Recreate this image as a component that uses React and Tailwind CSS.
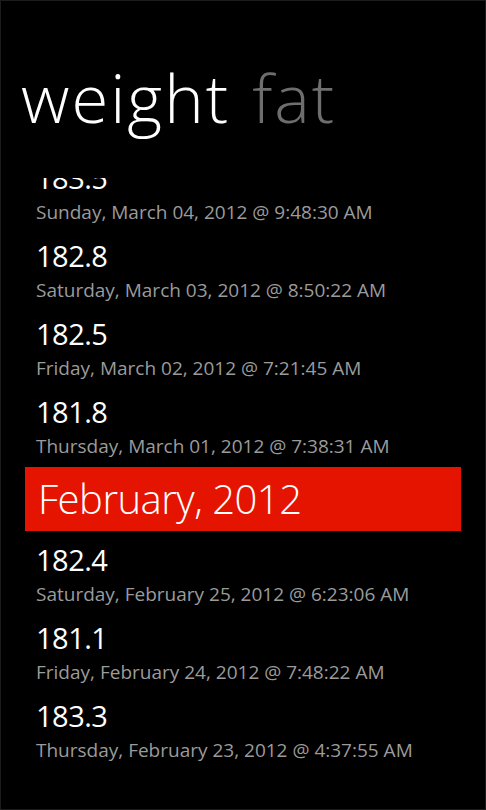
import React from "react";

const before = [
    { value: "183.5", date: "Sunday, March 04, 2012 @ 9:48:30 AM" },
    { value: "182.8", date: "Saturday, March 03, 2012 @ 8:50:22 AM" },
    { value: "182.5", date: "Friday, March 02, 2012 @ 7:21:45 AM" },
    { value: "181.8", date: "Thursday, March 01, 2012 @ 7:38:31 AM" },
];

const after = [
    { value: "182.4", date: "Saturday, February 25, 2012 @ 6:23:06 AM" },
    { value: "181.1", date: "Friday, February 24, 2012 @ 7:48:22 AM" },
    { value: "183.3", date: "Thursday, February 23, 2012 @ 4:37:55 AM" },
];

function Entry({ value, date }) {
    return (
        <div className="h-[78px] pt-[4px] pl-[35px]">
            <div className="text-[29px] leading-[38px] tracking-[-0.5px] text-white">{value}</div>
            <div className="text-[19px] leading-[30px] text-[#9b9b9b]">{date}</div>
        </div>
    );
}

export default function App() {
    return (
        <div
            className="w-[486px] h-[810px] bg-black border border-[#1c1c1c] overflow-hidden flex flex-col"
            style={{ fontFamily: '"Open Sans", "Noto Sans", sans-serif' }}
        >
            {/* Pivot header */}
            <div className="pt-[63px] pl-[20px] flex gap-[22px] text-[67px] leading-none tracking-[2px] font-light whitespace-nowrap">
                <span className="text-white">weight</span>
                <span className="text-[#6e6e6e]">fat</span>
            </div>

            {/* Scrolled list */}
            <div className="mt-[47px] flex-1 overflow-hidden">
                <div className="-mt-[23px] flex flex-col">
                    {before.map((e) => (
                        <Entry key={e.date} {...e} />
                    ))}
                    <div className="mx-[24px] mb-[6px] h-[64px] bg-[#e51400] pl-[13px] text-[40px] leading-[64px] tracking-[-0.5px] font-light text-white">
                        February, 2012
                    </div>
                    {after.map((e) => (
                        <Entry key={e.date} {...e} />
                    ))}
                </div>
            </div>
        </div>
    );
}
